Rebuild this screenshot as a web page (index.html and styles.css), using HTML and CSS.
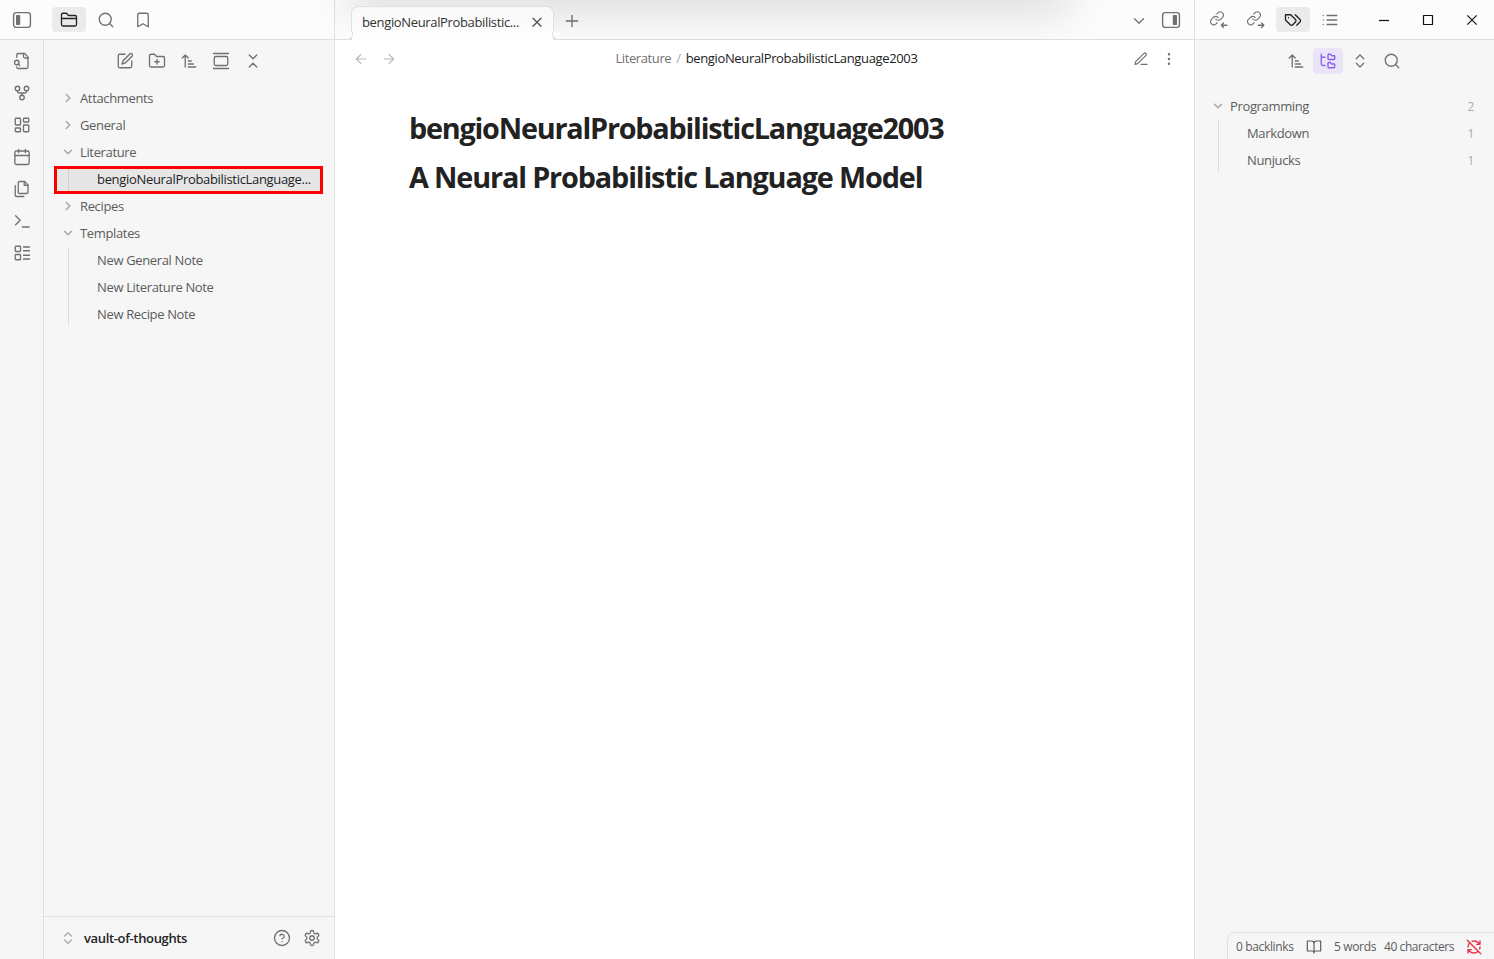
FILE: index.html
```
<!DOCTYPE html>
<html lang="en">
<head>
<meta charset="utf-8">
<title>bengioNeuralProbabilisticLanguage2003 - vault-of-thoughts</title>
<link rel="stylesheet" href="styles.css">
</head>
<body>
<svg class="sprite" aria-hidden="true">
  <symbol id="sort" viewBox="0 0 24 24"><path d="m3 8 4-4 4 4M7 4v16M11 12h4M11 16h7M11 20h10"/></symbol>
  <symbol id="search" viewBox="0 0 24 24"><circle cx="11" cy="11" r="8"/><path d="m21 21-4.3-4.3"/></symbol>
  <symbol id="down" viewBox="0 0 24 24"><path d="m6 9 6 6 6-6"/></symbol>
  <symbol id="right" viewBox="0 0 24 24"><path d="m9 18 6-6-6-6"/></symbol>
  <symbol id="updown" viewBox="0 0 24 24"><path d="m7 15 5 5 5-5M7 9l5-5 5 5"/></symbol>
  <symbol id="link" viewBox="0 0 24 24"><path d="M10 13a5 5 0 0 0 7.54.54l3-3a5 5 0 0 0-7.07-7.07l-1.72 1.71"/><path d="M14 11a5 5 0 0 0-7.54-.54l-3 3a5 5 0 0 0 7.07 7.07l1.71-1.71"/></symbol>
</svg>
<div class="app">
  <header class="titlebar">
    <div class="bar-left">
      <span class="toggle"><svg class="i20" viewBox="0 0 20 20"><rect x="1.6" y="2.6" width="16.8" height="14.8" rx="2.6"/><rect class="solid" x="4" y="5" width="4.2" height="10" rx=".8"/></svg></span>
      <div class="tabs-icons">
        <span class="tab-icon active"><svg class="i18" viewBox="0 0 24 24"><path d="M4 20h16a2 2 0 0 0 2-2V8a2 2 0 0 0-2-2h-7.93a2 2 0 0 1-1.66-.9l-.82-1.2A2 2 0 0 0 7.93 3H4a2 2 0 0 0-2 2v13c0 1.1.9 2 2 2ZM2 10h20"/></svg></span>
        <span class="tab-icon"><svg class="i18"><use href="#search"/></svg></span>
        <span class="tab-icon"><svg class="i18" viewBox="0 0 24 24"><path d="m19 21-7-4-7 4V5a2 2 0 0 1 2-2h10a2 2 0 0 1 2 2v16z"/></svg></span>
      </div>
    </div>
    <div class="bar-main">
      <div class="tab"><span class="tab-title">bengioNeuralProbabilistic...</span><svg class="i16 close" viewBox="0 0 24 24"><path d="M18 5 6 17M6 5l12 12"/></svg></div>
      <svg class="i18 plus" viewBox="0 0 24 24"><path d="M4.5 13.3h15M12 5.8v15"/></svg>
      <svg class="i18 tablist"><use href="#down"/></svg>
      <svg class="i20" viewBox="0 0 20 20"><rect x="1.6" y="2.6" width="16.8" height="14.8" rx="2.6"/><rect class="solid" x="11.8" y="5" width="4.2" height="10" rx=".8"/></svg>
    </div>
    <div class="bar-right">
      <div class="tabs-icons">
        <span class="tab-icon"><svg class="i18" viewBox="0 0 24 24"><g transform="translate(-1 -.5) scale(.86)"><use href="#link" width="24" height="24"/></g><path d="M22.5 19H15M18 16l-3 3 3 3"/></svg></span>
        <span class="tab-icon"><svg class="i18" viewBox="0 0 24 24"><g transform="translate(-1 -.5) scale(.86)"><use href="#link" width="24" height="24"/></g><path d="M15 19h7.5M19.5 16l3 3-3 3"/></svg></span>
        <span class="tab-icon active"><svg class="i18" viewBox="0 0 24 24"><path d="M9 5H2v7l6.29 6.29c.94.94 2.48.94 3.42 0l3.58-3.58c.94-.94.94-2.48 0-3.42L9 5ZM6 9.01V9M15 5l6.3 6.3a2.4 2.4 0 0 1 0 3.4L17 19"/></svg></span>
        <span class="tab-icon"><svg class="i18" viewBox="0 0 24 24"><path d="M8 6h13M8 12h13M8 18h13M3 6h.01M3 12h.01M3 18h.01"/></svg></span>
      </div>
      <div class="window-buttons">
        <svg viewBox="0 0 12 12"><path d="M1 6.5h10"/></svg>
        <svg viewBox="0 0 12 12"><path d="M1.5 1.5h9v9h-9z"/></svg>
        <svg viewBox="0 0 12 12"><path d="m1.3 1.3 9.4 9.4M10.7 1.3l-9.4 9.4"/></svg>
      </div>
    </div>
    <div class="top-shade"></div>
  </header>

  <div class="workspace">
    <nav class="ribbon">
      <svg viewBox="0 0 24 24"><path d="M14 2v4a2 2 0 0 0 2 2h4"/><path d="M5 7V4a2 2 0 0 1 2-2h8.5L20 6.5V20a2 2 0 0 1-2 2H7a2 2 0 0 1-2-2"/><circle cx="5" cy="14" r="3"/><path d="m9 18-1.8-1.8"/></svg>
      <svg viewBox="0 0 24 24"><circle cx="12" cy="18" r="3"/><circle cx="6" cy="6" r="3"/><circle cx="18" cy="6" r="3"/><path d="M18 9v1a2 2 0 0 1-2 2H8a2 2 0 0 1-2-2V9M12 12v3"/></svg>
      <svg viewBox="0 0 24 24"><rect x="3" y="3" width="7" height="9" rx="1"/><rect x="14" y="3" width="7" height="5" rx="1"/><rect x="14" y="12" width="7" height="9" rx="1"/><rect x="3" y="16" width="7" height="5" rx="1"/></svg>
      <svg viewBox="0 0 24 24"><rect x="2.5" y="4" width="19" height="18" rx="2"/><path d="M16.5 2v4M7.5 2v4M2.5 10h19"/></svg>
      <svg viewBox="0 0 24 24"><path d="M15.5 2H8.6c-.4 0-.8.2-1.1.5-.3.3-.5.7-.5 1.1v12.8c0 .4.2.8.5 1.1.3.3.7.5 1.1.5h9.8c.4 0 .8-.2 1.1-.5.3-.3.5-.7.5-1.1V6.5L15.5 2z"/><path d="M3 7.6v12.8c0 .4.2.8.5 1.1.3.3.7.5 1.1.5h9.8M15 2v5h5"/></svg>
      <svg viewBox="0 0 24 24"><path d="m3.5 17 6-6-6-6M12.5 20h9"/></svg>
      <svg viewBox="0 0 24 24"><rect x="3" y="3" width="7" height="7" rx="1"/><rect x="3" y="14" width="7" height="7" rx="1"/><path d="M14 4h8M14 9h8M14 15h8M14 20h8"/></svg>
    </nav>

    <aside class="sidebar">
      <div class="toolbar">
        <span><svg viewBox="0 0 24 24"><path d="M12 3H5a2 2 0 0 0-2 2v14a2 2 0 0 0 2 2h14a2 2 0 0 0 2-2v-7"/><path d="M18.4 2.6a2.1 2.1 0 0 1 3 3L12.4 14.6 8 16l1.4-4.4Z"/></svg></span>
        <span><svg viewBox="0 0 24 24"><path d="M12 10v6M9 13h6M20 20a2 2 0 0 0 2-2V8a2 2 0 0 0-2-2h-7.9a2 2 0 0 1-1.69-.9L9.6 3.9A2 2 0 0 0 7.93 3H4a2 2 0 0 0-2 2v13a2 2 0 0 0 2 2Z"/></svg></span>
        <span><svg><use href="#sort"/></svg></span>
        <span><svg viewBox="0 0 24 24"><rect x="3" y="6" width="18" height="12" rx="2"/><path d="M2 2h20M2 22h20"/></svg></span>
        <span><svg viewBox="0 0 24 24"><path d="m7 20 5-5 5 5M7 4l5 5 5-5"/></svg></span>
      </div>
      <div class="tree">
        <div class="row"><svg><use href="#right"/></svg>Attachments</div>
        <div class="row"><svg><use href="#right"/></svg>General</div>
        <div class="row"><svg><use href="#down"/></svg>Literature</div>
        <div class="selected"><div class="row child">bengioNeuralProbabilisticLanguage...</div></div>
        <div class="row"><svg><use href="#right"/></svg>Recipes</div>
        <div class="row"><svg><use href="#down"/></svg>Templates</div>
        <div class="children">
          <div class="row child">New General Note</div>
          <div class="row child">New Literature Note</div>
          <div class="row child">New Recipe Note</div>
        </div>
      </div>
      <footer class="vault">
        <svg class="switch"><use href="#updown"/></svg>
        <span class="vault-name">vault-of-thoughts</span>
        <svg class="i18" viewBox="0 0 24 24"><circle cx="12" cy="12" r="10"/><path d="M9.09 9a3 3 0 0 1 5.83 1c0 2-3 3-3 3M12 17h.01"/></svg>
        <svg class="i18" viewBox="0 0 24 24"><path d="M12.22 2h-.44a2 2 0 0 0-2 2v.18a2 2 0 0 1-1 1.73l-.43.25a2 2 0 0 1-2 0l-.15-.08a2 2 0 0 0-2.73.73l-.22.38a2 2 0 0 0 .73 2.73l.15.1a2 2 0 0 1 1 1.72v.51a2 2 0 0 1-1 1.74l-.15.09a2 2 0 0 0-.73 2.73l.22.38a2 2 0 0 0 2.73.73l.15-.08a2 2 0 0 1 2 0l.43.25a2 2 0 0 1 1 1.73V20a2 2 0 0 0 2 2h.44a2 2 0 0 0 2-2v-.18a2 2 0 0 1 1-1.73l.43-.25a2 2 0 0 1 2 0l.15.08a2 2 0 0 0 2.73-.73l.22-.39a2 2 0 0 0-.73-2.73l-.15-.08a2 2 0 0 1-1-1.74v-.5a2 2 0 0 1 1-1.74l.15-.09a2 2 0 0 0 .73-2.73l-.22-.38a2 2 0 0 0-2.73-.73l-.15.08a2 2 0 0 1-2 0l-.43-.25a2 2 0 0 1-1-1.73V4a2 2 0 0 0-2-2z"/><circle cx="12" cy="12" r="3"/></svg>
      </footer>
    </aside>

    <main class="view">
      <div class="view-header">
        <div class="history">
          <svg viewBox="0 0 24 24"><path d="m12 19-7-7 7-7M19 12H5"/></svg>
          <svg viewBox="0 0 24 24"><path d="M5 12h14M12 5l7 7-7 7"/></svg>
        </div>
        <div class="crumbs"><span class="folder">Literature</span><span class="slash">/</span><span class="file">bengioNeuralProbabilisticLanguage2003</span></div>
        <div class="actions">
          <svg viewBox="0 0 24 24"><path d="M12 20h9M16.5 3.5a2.12 2.12 0 0 1 3 3L7 19l-4 1 1-4Z"/></svg>
          <svg class="dots" viewBox="0 0 24 24"><circle cx="12" cy="5" r="1"/><circle cx="12" cy="12" r="1"/><circle cx="12" cy="19" r="1"/></svg>
        </div>
      </div>
      <article class="note">
        <h1 class="title">bengioNeuralProbabilisticLanguage2003</h1>
        <h1 class="heading">A Neural Probabilistic Language Model</h1>
      </article>
    </main>

    <aside class="tags">
      <div class="toolbar">
        <span><svg><use href="#sort"/></svg></span>
        <span class="on"><svg viewBox="0 0 24 24"><path d="M20 10a1 1 0 0 0 1-1V6a1 1 0 0 0-1-1h-2.5a1 1 0 0 1-.8-.4l-.9-1.2A1 1 0 0 0 15 3h-2a1 1 0 0 0-1 1v5a1 1 0 0 0 1 1ZM20 21a1 1 0 0 0 1-1v-3a1 1 0 0 0-1-1h-2.9a1 1 0 0 1-.88-.55l-.42-.85a1 1 0 0 0-.92-.6H13a1 1 0 0 0-1 1v5a1 1 0 0 0 1 1ZM3 5a2 2 0 0 0 2 2h3M3 3v13a2 2 0 0 0 2 2h3"/></svg></span>
        <span><svg><use href="#updown"/></svg></span>
        <span><svg class="i18"><use href="#search"/></svg></span>
      </div>
      <div class="tree">
        <div class="row"><svg><use href="#down"/></svg>Programming<span class="count">2</span></div>
        <div class="children">
          <div class="row child">Markdown<span class="count">1</span></div>
          <div class="row child">Nunjucks<span class="count">1</span></div>
        </div>
      </div>
      <div class="status">
        <span class="s-back">0 backlinks</span>
        <svg viewBox="0 0 24 24"><path d="M2 3h6a4 4 0 0 1 4 4v14a3 3 0 0 0-3-3H2zM22 3h-6a4 4 0 0 0-4 4v14a3 3 0 0 1 3-3h7z"/></svg>
        <span class="s-words">5 words</span>
        <span class="s-chars">40 characters</span>
        <svg class="sync" viewBox="0 0 24 24"><path d="M21 8 18.74 5.74A9.75 9.75 0 0 0 12 3C11 3 10.03 3.16 9.13 3.47M8 16H3v5M3 12C3 9.51 4 7.26 5.64 5.64M3 16l2.26 2.26A9.75 9.75 0 0 0 12 21c2.49 0 4.74-1 6.36-2.64M21 12c0 1-.16 1.97-.47 2.87M21 3v5h-5M22 22 2 2"/></svg>
      </div>
    </aside>
  </div>
</div>
</body>
</html>
```
FILE: styles.css
```
* { box-sizing: border-box; }
body { margin: 0; background: #fff; color: #222; font: 13px/1 "Open Sans", "Noto Sans", sans-serif; letter-spacing: -0.35px; overflow: hidden; }
svg { display: block; flex: none; width: 18px; height: 18px; fill: none; stroke: currentColor; stroke-width: 1.75; stroke-linecap: round; stroke-linejoin: round; }
.sprite { position: absolute; width: 0; height: 0; }
.i16 { width: 16px; height: 16px; }
.i18 { width: 18px; height: 18px; }
.i20 { width: 20px; height: 20px; stroke-width: 1.4; }
.solid { fill: currentColor; stroke: none; }
.app { display: flex; flex-direction: column; width: 1494px; height: 959px; }

.titlebar { position: relative; display: flex; flex: none; height: 40px; background: #fcfcfc; color: #707070; overflow: hidden; }
.bar-left { display: flex; align-items: center; width: 335px; border-right: 1px solid #e0e0e0; border-bottom: 1px solid #e0e0e0; }
.toggle { width: 52px; padding-left: 12px; }
.tabs-icons { display: flex; gap: 3px; }
.tab-icon { display: grid; place-items: center; width: 34px; height: 25px; border-radius: 4px; }
.tab-icon.active { background: #ebebeb; color: #222; }
.bar-main { display: flex; align-items: center; width: 859px; padding-right: 13px; border-bottom: 1px solid #e0e0e0; }
.tab { position: relative; z-index: 2; display: flex; align-items: center; align-self: flex-end; justify-content: space-between; width: 203px; height: 34px; margin: 0 0 -1px 16px; padding: 0 8px 2px 10px; background: linear-gradient(#f8f8f8, #fff); border: 1px solid #e0e0e0; border-bottom: 0; border-radius: 7px 7px 0 0; color: #333; }
.tab::before, .tab::after { content: ""; position: absolute; bottom: 0; width: 7px; height: 7px; border: 1px solid #e0e0e0; border-top: 0; background: #fcfcfc; }
.tab::before { left: -7px; border-left: 0; border-bottom-right-radius: 6px; }
.tab::after { right: -7px; border-right: 0; border-bottom-left-radius: 6px; }
.close { color: #555; stroke-width: 2; }
.plus { margin-left: 9px; }
.tablist { margin: 2px 13px 0 auto; }
.bar-right { display: flex; align-items: center; width: 300px; padding-left: 7px; border-left: 1px solid #e0e0e0; border-bottom: 1px solid #e0e0e0; }
.window-buttons { display: flex; gap: 32px; margin-left: 31px; color: #111; }
.window-buttons svg { width: 12px; height: 12px; stroke-width: 1.2; stroke-linecap: butt; }
.top-shade { position: absolute; z-index: 1; top: -30px; left: 358px; width: 704px; height: 20px; box-shadow: 0 13px 44px 8px rgba(0, 0, 0, .15); }

.workspace { display: flex; flex: 1; min-height: 0; }
.ribbon { display: flex; flex-direction: column; gap: 14px; align-items: center; width: 44px; padding-top: 12px; background: #f6f6f6; border-right: 1px solid #e0e0e0; color: #707070; }
.sidebar { display: flex; flex-direction: column; width: 291px; background: #f6f6f6; border-right: 1px solid #e0e0e0; color: #5c5c5c; }
.toolbar { display: flex; justify-content: center; gap: 2px; height: 45px; padding-top: 8px; color: #707070; }
.toolbar span { display: grid; place-items: center; width: 30px; height: 26px; border-radius: 4px; }
.tags .toolbar { padding-right: 2px; }
.toolbar .on { background: #e9e4f6; color: #8a5cf5; }
.tree { flex: 1; }
.row { display: flex; align-items: center; height: 26.9px; padding: 0 20px 0 17px; white-space: nowrap; }
.row svg { width: 14px; height: 14px; margin-right: 5px; color: #ababab; stroke-width: 2.8; }
.child { padding-left: 28px; }
.children { margin-left: 24px; border-left: 1px solid #dcdcdc; height: 78px; margin-top: 2px; }
.children .row:first-child { margin-top: -1px; }
.children .row:nth-child(3) { margin-top: -0.6px; }
.selected { display: flex; align-items: center; height: 28px; margin: 0 11px -1px 10px; border: 3px solid #f00; background: #e6e6e6; color: #222; letter-spacing: -0.32px; }
.selected .child { height: 22px; margin-left: 11px; padding: 0 0 0 28px; border-left: 1px solid #d0d0d0; }
.vault { display: flex; align-items: center; height: 43px; padding: 0 13px 0 16px; border-top: 1px solid #e0e0e0; color: #707070; }
.switch { width: 16px; height: 16px; margin: 0 8px 1px 0; color: #ababab; stroke-width: 2.1; }
.vault-name { margin-right: auto; color: #222; font-weight: 600; }
.vault .i18:last-child { margin-left: 12px; }

.view { width: 859px; background: #fff; }
.view-header { display: flex; align-items: center; justify-content: space-between; height: 38px; padding: 0 17px 0 18px; }
.history, .actions { display: flex; gap: 12px; color: #b8b8b8; }
.history svg, .actions svg { width: 16px; height: 16px; }
.actions { color: #707070; }
.dots { fill: currentColor; }
.crumbs { display: flex; padding: 0 0 2px 3px; }
.folder { color: #707070; letter-spacing: -0.4px; }
.slash { margin: 0 5px; color: #ababab; }
.file { letter-spacing: -0.35px; }
.note { padding: 32px 0 0 74px; }
.note h1 { margin: 0; height: 49px; font-size: 28.8px; line-height: 36px; font-weight: 700; white-space: nowrap; }
.note .title { letter-spacing: -1.22px; }
.note .heading { letter-spacing: -1.14px; }

.tags { position: relative; width: 300px; background: #f6f6f6; border-left: 1px solid #e0e0e0; color: #5c5c5c; }
.tags .tree { padding-top: 8px; }
.tags .row { padding-left: 16px; }
.tags .children { margin-left: 23px; height: 52px; }
.tags .children .row { padding-left: 28px; }
.tags .children .row:first-child { margin-top: -2px; }
.count { margin-left: auto; color: #ababab; font-size: 12px; padding-top: 1px; }
.status { position: absolute; right: 0; bottom: 0; display: flex; align-items: center; width: 267px; height: 27px; padding: 1px 0 0 8px; border: 1px solid #e0e0e0; border-width: 1px 0 0 1px; border-radius: 8px 0 0; font-size: 12px; }
.status svg { width: 16px; height: 16px; }
.s-back { width: 70px; }
.s-words { width: 50px; margin-left: 12px; }
.s-chars { width: 82px; letter-spacing: -0.42px; }
.status .sync { color: #e93147; stroke-width: 2.1; }
```
